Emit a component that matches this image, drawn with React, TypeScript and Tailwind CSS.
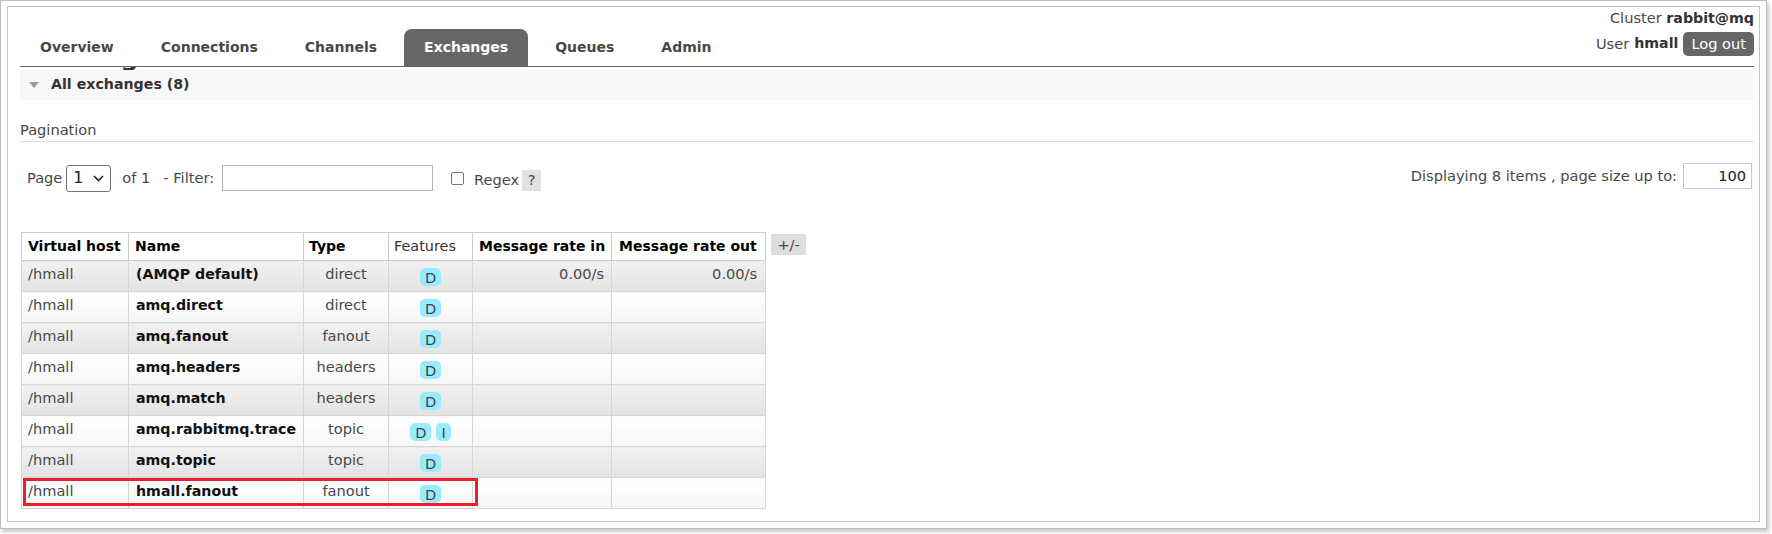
import React from 'react';

const rows = [
  { name: '(AMQP default)', type: 'direct', features: ['D'], rateIn: '0.00/s', rateOut: '0.00/s' },
  { name: 'amq.direct', type: 'direct', features: ['D'] },
  { name: 'amq.fanout', type: 'fanout', features: ['D'] },
  { name: 'amq.headers', type: 'headers', features: ['D'] },
  { name: 'amq.match', type: 'headers', features: ['D'] },
  { name: 'amq.rabbitmq.trace', type: 'topic', features: ['D', 'I'] },
  { name: 'amq.topic', type: 'topic', features: ['D'] },
  { name: 'hmall.fanout', type: 'fanout', features: ['D'] },
];

const tabs = ['Overview', 'Connections', 'Channels', 'Exchanges', 'Queues', 'Admin'];

export default function App() {
  return (
    <div className="bg-white w-[1772px] h-[534px] text-[14.6px] text-[#484848]" style={{ fontFamily: '"DejaVu Sans", Verdana, sans-serif' }}>
      <div className="w-[1767px] h-[529px] border border-[#bdbdbd] pl-[6px] pt-[5px] pr-[6px] pb-[6px] shadow-[2px_3px_4px_rgba(0,0,0,0.22)]">
        <div className="h-full border border-[#c4c4c4] pl-[12px] pr-[5px]">
          {/* Header */}
          <div className="h-[60px] border-b border-[#666] flex justify-between">
            <div className="flex items-end gap-[7px]">
              {tabs.map((t) => (
                <div
                  key={t}
                  className={
                    t === 'Exchanges'
                      ? 'h-[37px] px-[20px] flex items-center font-bold text-[14px] rounded-t-[8px] bg-[#666] text-white'
                      : 'h-[37px] px-[20px] flex items-center font-bold text-[14px] text-[#484848]'
                  }
                >
                  {t}
                </div>
              ))}
            </div>
            <div className="flex flex-col items-end pt-[2px]">
              <div className="leading-[18px]">
                Cluster <b className="text-[#333] text-[14.2px]">rabbit@mq</b>
              </div>
              <div className="flex items-center mt-[5px] h-[24px]">
                <span>User</span>
                <b className="ml-[5px] text-[#333] text-[14.2px]">hmall</b>
                <div className="ml-[5px] h-[24px] px-[8px] rounded-[5px] bg-[#666] text-white flex items-center">Log out</div>
              </div>
            </div>
          </div>

          {/* page heading hidden under the menu, only the g descender peeks out */}
          <div className="h-[3px] overflow-hidden">
            <div className="text-[25px] leading-[24px] font-bold text-[#333] -mt-[21px]">Exchanges</div>
          </div>

          {/* Section title */}
          <div className="h-[30px] bg-[#f7f7f7] flex items-center pl-[8px]">
            <svg width="12" height="8" viewBox="0 0 12 8" className="mr-[11px]">
              <path d="M1 1h10L6 7z" fill="#9a9a9a" />
            </svg>
            <span className="font-bold text-[#333] text-[14.2px]">All exchanges (8)</span>
          </div>

          {/* Pagination */}
          <div className="mt-[21px] leading-[18px] pb-[2px] border-b border-[#ddd]">Pagination</div>

          <div className="mt-[22px] h-[28px] flex items-center justify-between">
            <div className="flex items-center pl-[7px]">
              <span>Page</span>
              <div className="ml-[4px] w-[45px] h-[27px] border border-[#767676] rounded-[3px] flex items-center justify-between pl-[6px] pr-[6px] text-[16px] text-[#222]">
                <span>1</span>
                <svg width="11" height="7" viewBox="0 0 11 7">
                  <path d="M1 1l4.5 4.5L10 1" fill="none" stroke="#222" strokeWidth="1.6" />
                </svg>
              </div>
              <span className="ml-[11px]">of 1</span>
              <span className="ml-[13px]">- Filter:</span>
              <div className="ml-[8px] w-[211px] h-[26px] border border-[#b5b5b5] bg-white" />
              <div className="ml-[18px] w-[13px] h-[13px] border border-[#767676] rounded-[2px] bg-white" />
              <span className="ml-[10px] mt-[4px]">Regex</span>
              <div className="ml-[3px] mt-[4px] w-[19px] h-[21px] bg-[#e2e2e2] flex items-center justify-center">?</div>
            </div>
            <div className="flex items-center mb-[4px] mr-[2px]">
              <span>Displaying 8 items , page size up to:</span>
              <div className="ml-[6px] w-[69px] h-[26px] border border-[#c8c8c8] flex items-center justify-end pr-[5px] text-[#222]">100</div>
            </div>
          </div>

          {/* Table */}
          <div className="mt-[40px] flex items-start gap-[5px] pl-[1px]">
            <div className="relative">
              <table className="border-collapse border border-[#ccc] whitespace-nowrap">
                <thead>
                  <tr className="h-[28px] bg-white text-black text-[14px]">
                    <th className="w-[107px] border border-[#ccc] px-[6px] text-left font-bold">Virtual host</th>
                    <th className="w-[175px] border border-[#ccc] px-[6px] text-left font-bold">Name</th>
                    <th className="w-[85px] border border-[#ccc] px-[5px] text-left font-bold">Type</th>
                    <th className="w-[84px] border border-[#ccc] px-[5px] text-left font-normal text-[14.4px] text-[#333]">Features</th>
                    <th className="w-[139px] border border-[#ccc] px-[6px] text-left font-bold">Message rate in</th>
                    <th className="w-[154px] border border-[#ccc] px-[7px] text-left font-bold">Message rate out</th>
                  </tr>
                </thead>
                <tbody>
                  {rows.map((r, i) => {
                    const bg =
                      i % 2 === 0
                        ? 'bg-linear-to-b from-[#f2f2f2] to-[#e3e3e3]'
                        : 'bg-linear-to-b from-[#ffffff] to-[#f6f6f6]';
                    const cell = `border border-[#d6d6d6] align-top pt-[4px] leading-[18px] ${bg}`;
                    return (
                      <tr key={r.name} className="h-[31px]">
                        <td className={`${cell} pl-[6px]`}>/hmall</td>
                        <td className={`${cell} pl-[7px] font-bold text-[14.2px] text-[#111]`}>{r.name}</td>
                        <td className={`${cell} text-center`}>{r.type}</td>
                        <td className={cell}>
                          <div className="flex justify-center gap-[5px] pt-[3px]">
                            {r.features.map((f) => (
                              <span key={f} className="h-[18px] leading-[19px] px-[5px] rounded-[5px] bg-[#99ebff] text-[#444]">
                                {f}
                              </span>
                            ))}
                          </div>
                        </td>
                        <td className={`${cell} text-right pr-[7px]`}>{r.rateIn ?? ''}</td>
                        <td className={`${cell} text-right pr-[8px]`}>{r.rateOut ?? ''}</td>
                      </tr>
                    );
                  })}
                </tbody>
              </table>
              {/* highlight around the new exchange */}
              <div className="absolute left-[2px] top-[246px] w-[455px] h-[28px] border-[3px] border-[#e8202a]" />
            </div>
            <div className="mt-[2px] w-[35px] h-[21px] bg-[#dedede] flex items-center justify-center">+/-</div>
          </div>
        </div>
      </div>
    </div>
  );
}
